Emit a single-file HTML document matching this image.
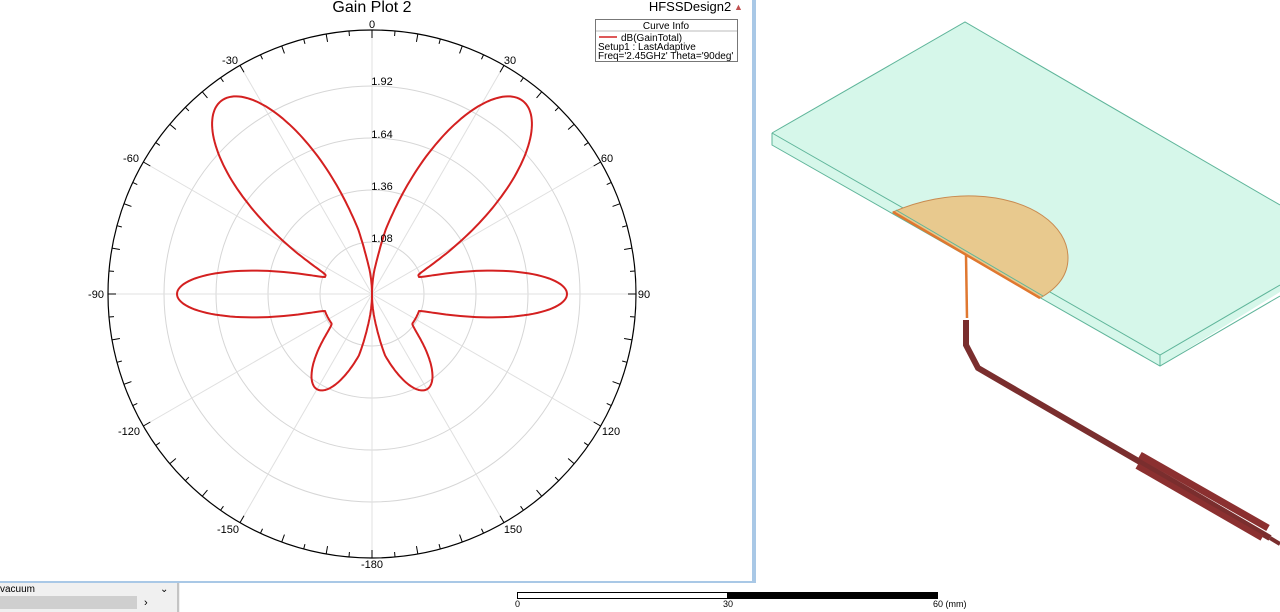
<!DOCTYPE html>
<html><head><meta charset="utf-8"><style>
html,body{margin:0;padding:0;width:1280px;height:612px;overflow:hidden;background:#fff;font-family:"Liberation Sans",sans-serif;}
#plot{position:absolute;left:0;top:0;width:752px;height:581px;background:#fff;border-right:4px solid #a9c8e6;border-bottom:2px solid #a9c8e6;}
</style></head><body>
<div id="plot">
<svg width="752" height="581" style="position:absolute;left:0;top:0" id="ps">
<g fill="none" stroke="#d6d6d6" stroke-width="1">
<circle cx="372" cy="294" r="52"/><circle cx="372" cy="294" r="104"/><circle cx="372" cy="294" r="156"/><circle cx="372" cy="294" r="208"/>
</g>
<g id="spokes" stroke="#e0e0e0" stroke-width="1"></g>
<circle cx="372" cy="294" r="264" fill="none" stroke="#000" stroke-width="1.2"/>
<g id="ticks" stroke="#000" stroke-width="1"></g>
<path id="curve" fill="none" stroke="#d42020" stroke-width="2"/>
<text x="372" y="12" font-size="16" text-anchor="middle" font-family="Liberation Sans">Gain Plot 2</text>
<g font-size="11" font-family="Liberation Sans" text-anchor="middle">
<text x="372" y="28">0</text><text x="230" y="64">-30</text><text x="510" y="64">30</text>
<text x="131" y="162">-60</text><text x="607" y="162">60</text>
<text x="96" y="298">-90</text><text x="644" y="298">90</text>
<text x="129" y="435">-120</text><text x="611" y="435">120</text>
<text x="228" y="533">-150</text><text x="513" y="533">150</text>
<text x="372" y="568">-180</text>
<text x="382" y="85">1.92</text><text x="382" y="138">1.64</text><text x="382" y="190">1.36</text><text x="382" y="242">1.08</text>
</g>
<text x="690" y="11" font-size="13" text-anchor="middle">HFSSDesign2</text>
<text x="734" y="10" font-size="9" fill="#c05050">▲</text>
<rect x="595.5" y="19.5" width="142" height="42" fill="#fff" stroke="#777"/>
<line x1="596" y1="31" x2="737" y2="31" stroke="#bbb"/>
<text x="666" y="29" font-size="10" text-anchor="middle">Curve Info</text>
<line x1="599" y1="37" x2="617" y2="37" stroke="#d42020" stroke-width="1.5"/>
<text x="621" y="41" font-size="10">dB(GainTotal)</text>
<text x="598" y="50" font-size="10">Setup1 : LastAdaptive</text>
<text x="598" y="59" font-size="10">Freq='2.45GHz' Theta='90deg'</text>
</svg>
</div>
<svg width="1280" height="612" style="position:absolute;left:0;top:0">
<polygon points="772,133 965,22 1280,205 1280,292 1160,366 772,145" fill="#d6f7ea" stroke="none"/>
<polyline points="772,133 965,22 1280,205" fill="none" stroke="#5fb59a" stroke-width="1"/>
<polyline points="772,133 1160,355 1280,285" fill="none" stroke="#5fb59a" stroke-width="1"/>
<polyline points="772,133 772,145 1160,366 1280,296" fill="none" stroke="#5fb59a" stroke-width="1"/>
<line x1="1160" y1="355" x2="1160" y2="366" stroke="#5fb59a"/>
<path d="M893,212 C920,200 950,195 975,196 C1030,198 1068,225 1068,258 C1068,275 1058,288 1040,298 Z" fill="#e8c98e" stroke="#c88a50" stroke-width="1"/>
<line x1="893" y1="212" x2="1040" y2="298" stroke="#e07830" stroke-width="2.5"/>
<line x1="896" y1="210" x2="1043" y2="296" stroke="#5fb59a" stroke-width="1"/>
<line x1="966" y1="255" x2="967" y2="318" stroke="#e07830" stroke-width="2.5"/>
<polyline points="966,320 966,345 978,368 1140,462 1270,538" fill="none" stroke="#7a2e2e" stroke-width="6"/>
<polyline points="1140,455 1268,528" fill="none" stroke="#8b3030" stroke-width="7"/>
<polyline points="1137,466 1262,538" fill="none" stroke="#8b3030" stroke-width="6"/>
<line x1="1270" y1="538" x2="1280" y2="544" stroke="#7a2e2e" stroke-width="4"/>
<rect x="0" y="583" width="180" height="29" fill="#f0f0f0"/>
<line x1="178" y1="583" x2="178" y2="612" stroke="#999"/>
<text x="0" y="592" font-size="10">vacuum</text>
<text x="160" y="592" font-size="10">⌄</text>
<rect x="0" y="596" width="137" height="13" fill="#cfcfcf"/>
<text x="144" y="606" font-size="11">›</text>
<rect x="517.5" y="592.5" width="210" height="6" fill="#fff" stroke="#000"/>
<rect x="727" y="592" width="211" height="7" fill="#000"/>
<g font-size="9" font-family="Liberation Sans"><text x="515" y="607">0</text><text x="723" y="607">30</text><text x="933" y="607">60 (mm)</text></g>
</svg>
<script>
var cx=372,cy=294,sp=document.getElementById('spokes'),tk=document.getElementById('ticks'),s='',t='';
for(var a=0;a<360;a+=30){var r=a*Math.PI/180;s+='<line x1="'+cx+'" y1="'+cy+'" x2="'+(cx+264*Math.sin(r))+'" y2="'+(cy-264*Math.cos(r))+'"/>';}
sp.innerHTML=s;
for(var a=0;a<360;a+=5){var r=a*Math.PI/180,l=(a%10==0)?8:5;t+='<line x1="'+(cx+264*Math.sin(r))+'" y1="'+(cy-264*Math.cos(r))+'" x2="'+(cx+(264-l)*Math.sin(r))+'" y2="'+(cy-(264-l)*Math.cos(r))+'"/>';}
tk.innerHTML=t;
function lobe(th,c,p,w){var d=Math.abs(th-c);if(d>180)d=360-d;if(d>w)return 0;return p*Math.pow(Math.cos(d/w*Math.PI/2),1.6);}
var pts=[];
for(var i=0;i<=720;i++){var th=i/2-180;var r=0;
[[38,195,30],[-38,195,30],[90,145,20],[-90,145,20],[150,60,24],[-150,60,24]].forEach(function(L){r+=lobe(th,L[0],L[1],L[2]);});
var d=Math.abs(th);r+=50*Math.min(1,d/12)*Math.min(1,(180-d)/12);
var rr=th*Math.PI/180;pts.push((cx+r*Math.sin(rr)).toFixed(1)+','+(cy-r*Math.cos(rr)).toFixed(1));}
document.getElementById('curve').setAttribute('d','M'+pts.join('L')+'Z');
</script>
</body></html>
